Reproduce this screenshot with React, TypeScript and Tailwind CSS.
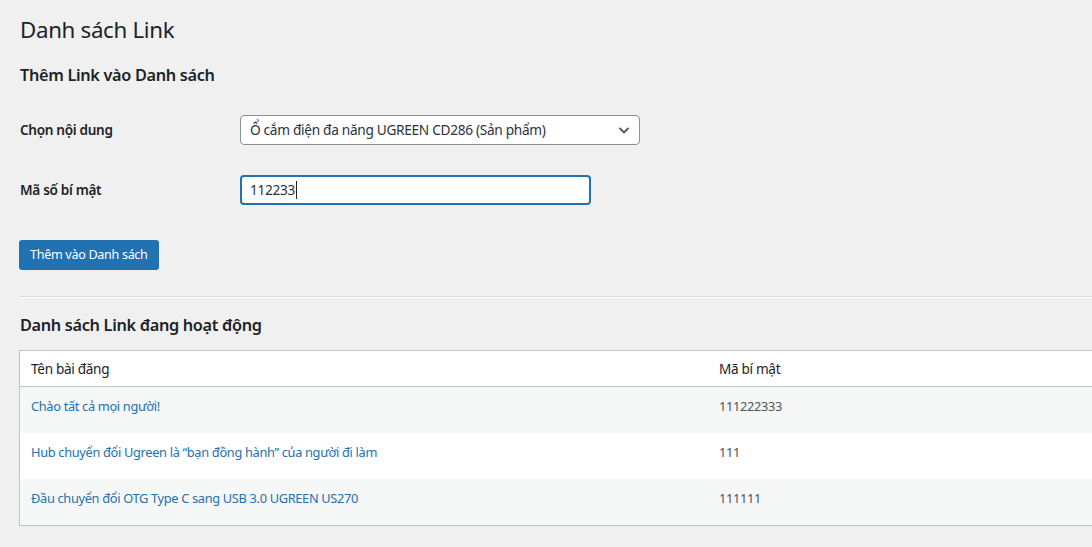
import React from "react";

const rows = [
  { title: "Chào tất cả mọi người!", code: "111222333" },
  { title: "Hub chuyển đổi Ugreen là “bạn đồng hành” của người đi làm", code: "111" },
  { title: "Đầu chuyển đổi OTG Type C sang USB 3.0 UGREEN US270", code: "111111" },
];

export default function App() {
  return (
    <div
      className="min-h-[547px] w-[1092px] overflow-hidden bg-[#f0f0f1] text-[#1d2327] tracking-[-0.02em]"
      style={{ fontFamily: '"Noto Sans", "Open Sans", sans-serif' }}
    >
      <div className="pl-[19px] pt-[15px]">
        <h1 className="pl-px text-[22.3px] leading-[30px] font-normal text-[#1d2327]">Danh sách Link</h1>
        <h2 className="mt-[19px] pl-px text-[16.3px] leading-[22px] font-semibold text-[#1d2327]">
          Thêm Link vào Danh sách
        </h2>

        <div className="mt-[29px] flex items-center">
          <label className="w-[221px] pl-px text-[13.6px] font-semibold">Chọn nội dung</label>
          <div className="flex h-[30px] w-[400px] items-center justify-between rounded-[4px] border border-[#8c8f94] bg-white pl-[9px] pr-[8px]">
            <span className="text-[13.7px] text-[#2c3338]">Ổ cắm điện đa năng UGREEN CD286 (Sản phẩm)</span>
            <svg width="14" height="14" viewBox="0 0 14 14" fill="none">
              <path d="M2.5 5 L7 9.5 L11.5 5" stroke="#50575e" strokeWidth="1.8" />
            </svg>
          </div>
        </div>

        <div className="mt-[30px] flex items-center">
          <label className="w-[221px] pl-px text-[13.6px] font-semibold">Mã số bí mật</label>
          <div className="flex h-[30px] w-[351px] items-center rounded-[4px] border-2 border-[#2271b1] bg-white pl-[8px]">
            <span className="text-[13.7px] text-[#2c3338]">112233</span>
            <span className="ml-px h-[18px] w-px bg-[#1d2327]" />
          </div>
        </div>

        <button className="mt-[35px] h-[30px] rounded-[3px] bg-[#2271b1] px-[11px] pt-px text-[12.6px] text-white">
          Thêm vào Danh sách
        </button>

        <div className="mt-[26px] ml-px border-t border-[#dcdcde] border-b border-b-white" />

        <h2 className="mt-[16px] pl-px text-[16.3px] leading-[22px] font-semibold text-[#1d2327]">
          Danh sách Link đang hoạt động
        </h2>

        <div className="mt-[14px] w-[1100px] border border-[#c3c4c7] bg-white">
          <div className="flex h-[36px] items-center border-b border-[#c3c4c7] pt-px text-[13.6px] text-[#1d2327]">
            <div className="w-[689px] pl-[11px]">Tên bài đăng</div>
            <div className="pl-[10px]">Mã bí mật</div>
          </div>
          {rows.map((r, i) => (
            <div
              key={i}
              className={`flex h-[46px] items-start pt-[10px] text-[12.8px] ${i % 2 === 0 ? "bg-[#f6f7f7]" : "bg-white"}`}
            >
              <div className="w-[689px] pl-[11px] text-[#2271b1]">{r.title}</div>
              <div className="pl-[10px] text-[#50575e]">{r.code}</div>
            </div>
          ))}
        </div>
      </div>
    </div>
  );
}
